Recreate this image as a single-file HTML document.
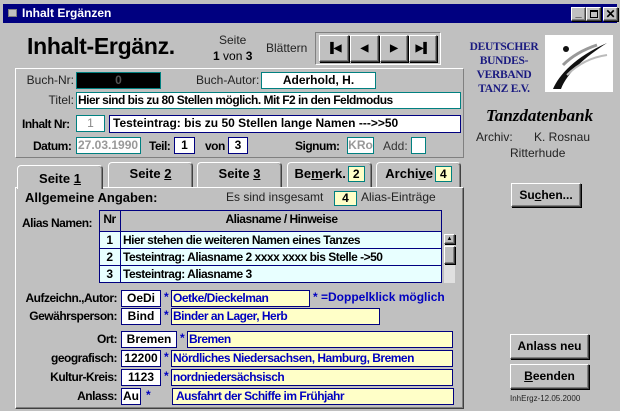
<!DOCTYPE html>
<html><head><meta charset="utf-8"><style>
*{margin:0;padding:0;box-sizing:border-box}
body{width:620px;height:411px;background:#c0c0c0;position:relative;overflow:hidden;font-family:"Liberation Sans",Arial,sans-serif;font-size:12px;color:#000}
.a{position:absolute;white-space:nowrap}
.b{font-weight:bold}
.f{position:absolute;background:#fff;border:1px solid #008080;white-space:nowrap;overflow:hidden;font-weight:bold;line-height:15px}
.n{border:1.5px solid #000080}
.y{background:#ffffc8;color:#0000c0;border:1px solid #000080;padding-left:1px}
.c{letter-spacing:-0.5px}
.r{text-align:right}
.btn{position:absolute;background:#c0c0c0;border:1px solid;border-color:#fff #404040 #404040 #fff;box-shadow:1px 1px 0 #000,inset -1px -1px 0 #808080;text-align:center;font-weight:bold;font-size:12px}
.tab{position:absolute;top:162px;height:26px;border:1px solid;border-color:#fff #404040 #c0c0c0 #fff;border-radius:4px 4px 0 0;box-shadow:inset -1px 0 0 #808080;font-weight:bold;font-size:13px;text-align:center;line-height:22px}
.sq{display:inline-block;background:#ffffc8;border:1px solid #008080;padding:0 4px;line-height:14px;font-size:12px;margin-left:2px}
</style></head><body>
<!-- title bar -->
<div class="a" style="left:3px;top:4px;width:614px;height:19px;background:#000080"></div>
<div class="a" style="left:8px;top:9px;width:9px;height:8px;background:#c0c0c0;border:1px solid #808080"></div>
<div class="a b" style="left:22px;top:6px;color:#fff;font-size:12px">Inhalt Ergänzen</div>
<div class="btn" style="left:571px;top:7px;width:15px;height:14px;line-height:10px;font-size:11px">_</div>
<div class="btn" style="left:586px;top:7px;width:15px;height:14px"><div style="position:absolute;left:3px;top:2px;width:8px;height:8px;border:1px solid #000;border-top-width:2px"></div></div>
<div class="btn" style="left:603px;top:7px;width:15px;height:14px;line-height:12px;font-size:12px">✕</div>

<div class="a b" style="left:27px;top:33px;font-size:23px;letter-spacing:-0.3px">Inhalt-Ergänz.</div>
<div class="a" style="left:219px;top:33px;font-size:12px;color:#222">Seite</div>
<div class="a" style="left:213px;top:49px;font-size:12px"><b>1</b> von <b>3</b></div>
<div class="a" style="left:266px;top:41px;font-size:12px;color:#222">Blättern</div>
<div class="a" style="left:315px;top:32px;width:126px;height:33px;border:1px solid;border-color:#808080 #fff #fff #808080"></div>
<div class="btn" style="left:319px;top:35px;width:30px;height:27px;line-height:25px;font-size:10px">▐◀</div>
<div class="btn" style="left:350px;top:35px;width:29px;height:27px;line-height:25px;font-size:10px">◀</div>
<div class="btn" style="left:380px;top:35px;width:28px;height:27px;line-height:25px;font-size:10px">▶</div>
<div class="btn" style="left:409px;top:35px;width:28px;height:27px;line-height:25px;font-size:10px">▶▌</div>

<div class="a b" style="left:462px;top:40px;width:84px;text-align:center;font-family:'Liberation Serif',serif;color:#1a1a80;font-size:11.5px;line-height:14px;letter-spacing:-0.3px">DEUTSCHER<br>BUNDES-<br>VERBAND<br>TANZ E.V.</div>
<div class="a" style="left:545px;top:35px;width:68px;height:57px;background:#fff">
<svg width="68" height="57"><path d="M8 54 C14 40 30 22 62 8 C40 22 22 38 16 54 Z" fill="#111"/><path d="M18 30 C28 20 40 14 52 10" stroke="#999" stroke-width="3" fill="none"/><path d="M22 40 C34 28 48 22 62 20" stroke="#bbb" stroke-width="2" fill="none"/><circle cx="21" cy="14" r="3" fill="#111"/></svg></div>
<div class="a b" style="left:486px;top:106px;font-family:'Liberation Serif',serif;font-style:italic;font-size:17px">Tanzdatenbank</div>
<div class="a" style="left:476px;top:130px;color:#222">Archiv:</div>
<div class="a" style="left:534px;top:130px;color:#222">K. Rosnau</div>
<div class="a" style="left:510px;top:146px;color:#222">Ritterhude</div>

<!-- upper frame -->
<div class="a" style="left:15px;top:68px;width:449px;height:90px;border:1px solid;border-color:#fff #808080 #808080 #fff"></div>
<div class="a r" style="left:20px;top:73px;width:54px;color:#222">Buch-Nr:</div>
<div class="f" style="left:76px;top:72px;width:85px;height:17px;background:#000;color:#555;text-align:center">0</div>
<div class="a" style="left:196px;top:73px;color:#222">Buch-Autor:</div>
<div class="f" style="left:261px;top:72px;width:115px;height:17px;text-align:center">Aderhold, H.</div>
<div class="a r" style="left:20px;top:93px;width:54px;color:#222">Titel:</div>
<div class="f c" style="left:76px;top:92px;width:385px;height:17px;padding-left:1px">Hier sind bis zu 80 Stellen möglich. Mit F2 in den Feldmodus</div>
<div class="a b c" style="left:22px;top:117px">Inhalt Nr:</div>
<div class="f" style="left:76px;top:115px;width:29px;height:17px;text-align:center;color:#888;font-weight:normal">1</div>
<div class="f n" style="left:109px;top:115px;width:352px;height:18px;padding-left:3px">Testeintrag: bis zu 50 Stellen lange Namen ---&gt;&gt;50</div>
<div class="a b c" style="left:33px;top:139px">Datum:</div>
<div class="f" style="left:76px;top:137px;width:65px;height:17px;color:#999;padding-left:1px">27.03.1990</div>
<div class="a b c" style="left:149px;top:139px">Teil:</div>
<div class="f n" style="left:174px;top:137px;width:21px;height:17px;text-align:center">1</div>
<div class="a b c" style="left:205px;top:139px">von</div>
<div class="f n" style="left:228px;top:137px;width:20px;height:17px;text-align:center">3</div>
<div class="a b c" style="left:295px;top:139px">Signum:</div>
<div class="f" style="left:347px;top:137px;width:27px;height:17px;color:#999;text-align:center">KRo</div>
<div class="a" style="left:383px;top:139px;color:#333">Add:</div>
<div class="f" style="left:411px;top:137px;width:15px;height:17px"></div>

<!-- tabs -->
<div class="tab" style="left:108px;width:85px">Seite <u>2</u></div>
<div class="tab" style="left:197px;width:85px">Seite <u>3</u></div>
<div class="tab" style="left:287px;width:85px">Be<u>m</u>erk.<span class="sq">2</span></div>
<div class="tab" style="left:376px;width:85px">Archi<u>v</u>e<span class="sq">4</span></div>
<div class="a" style="left:15px;top:187px;width:449px;height:222px;border:1px solid;border-color:#fff #404040 #404040 #fff;box-shadow:inset -1px -1px 0 #808080"></div>
<div class="tab" style="left:17px;top:165px;width:86px;height:24px;border-bottom:none;background:#c0c0c0;line-height:26px">Seite <u>1</u></div>

<div class="a b" style="left:25px;top:190px;font-size:13px">Allgemeine Angaben:</div>
<div class="a" style="left:226px;top:190px;color:#222">Es sind insgesamt</div>
<div class="f" style="left:334px;top:191px;width:23px;height:15px;background:#ffffc8;text-align:center;line-height:13px">4</div>
<div class="a" style="left:361px;top:190px;color:#222">Alias-Einträge</div>

<div class="a b c" style="left:22px;top:216px">Alias Namen:</div>
<div class="a" style="left:99px;top:210px;width:343px;height:73px;border:1px solid #000080;background:#c0c0c0"></div>
<div class="a b c" style="left:99px;top:212px;width:21px;text-align:center">Nr</div>
<div class="a" style="left:120px;top:210px;width:1px;height:73px;background:#000080"></div>
<div class="a b c" style="left:121px;top:212px;width:321px;text-align:center">Aliasname / Hinweise</div>
<div class="a" style="left:100px;top:231px;width:341px;height:51px;background:#e8ffff"></div>
<div class="a" style="left:100px;top:231px;width:341px;height:1px;background:#000080"></div>
<div class="a" style="left:100px;top:248px;width:341px;height:1px;background:#000080"></div>
<div class="a" style="left:100px;top:265px;width:341px;height:1px;background:#000080"></div>
<div class="a" style="left:120px;top:231px;width:1px;height:52px;background:#000080"></div>
<div class="a b c" style="left:99px;top:233px;width:21px;text-align:center">1</div>
<div class="a b c" style="left:123px;top:233px">Hier stehen die weiteren Namen eines Tanzes</div>
<div class="a b c" style="left:99px;top:250px;width:21px;text-align:center">2</div>
<div class="a b c" style="left:123px;top:250px">Testeintrag: Aliasname 2 xxxx xxxx bis Stelle -&gt;50</div>
<div class="a b c" style="left:99px;top:267px;width:21px;text-align:center">3</div>
<div class="a b c" style="left:123px;top:267px">Testeintrag: Aliasname 3</div>
<div class="a" style="left:444px;top:234px;width:11px;height:49px;background:#e0e0e0"></div>
<div class="btn" style="left:444px;top:234px;width:11px;height:10px;font-size:6px;line-height:8px">▲</div>
<div class="btn" style="left:444px;top:246px;width:11px;height:18px"></div>

<!-- lower fields -->
<div class="a b c r" style="left:10px;top:291px;width:107px">Aufzeichn.,Autor:</div>
<div class="f n" style="left:121px;top:290px;width:40px;height:17px;text-align:center;border-width:1px">OeDi</div>
<div class="a b" style="left:164px;top:290px;color:#0000c0">*</div>
<div class="f y c" style="left:171px;top:290px;width:139px;height:17px">Oetke/Dieckelman</div>
<div class="a b" style="left:313px;top:290px;color:#0000c0">* =Doppelklick möglich</div>

<div class="a b c r" style="left:10px;top:309px;width:107px">Gewährsperson:</div>
<div class="f n" style="left:121px;top:308px;width:40px;height:17px;text-align:center;border-width:1px">Bind</div>
<div class="a b" style="left:164px;top:308px;color:#0000c0">*</div>
<div class="f y c" style="left:171px;top:308px;width:209px;height:17px">Binder an Lager, Herb</div>

<div class="a b c r" style="left:10px;top:332px;width:107px">Ort:</div>
<div class="f n" style="left:121px;top:331px;width:56px;height:17px;text-align:center;border-width:1px">Bremen</div>
<div class="a b" style="left:180px;top:331px;color:#0000c0">*</div>
<div class="f y c" style="left:187px;top:331px;width:266px;height:17px">Bremen</div>

<div class="a b c r" style="left:10px;top:351px;width:107px">geografisch:</div>
<div class="f n" style="left:121px;top:350px;width:40px;height:17px;text-align:center;border-width:1px">12200</div>
<div class="a b" style="left:164px;top:350px;color:#0000c0">*</div>
<div class="f y c" style="left:171px;top:350px;width:282px;height:17px">Nördliches Niedersachsen, Hamburg, Bremen</div>

<div class="a b c r" style="left:10px;top:370px;width:107px">Kultur-Kreis:</div>
<div class="f n" style="left:121px;top:369px;width:40px;height:17px;text-align:center;border-width:1px">1123</div>
<div class="a b" style="left:164px;top:369px;color:#0000c0">*</div>
<div class="f y c" style="left:171px;top:369px;width:282px;height:17px">nordniedersächsisch</div>

<div class="a b c r" style="left:10px;top:389px;width:107px">Anlass:</div>
<div class="f n" style="left:121px;top:388px;width:20px;height:17px;text-align:center;border-width:1px">Au</div>
<div class="a b" style="left:146px;top:388px;color:#0000c0">*</div>
<div class="f y c" style="left:172px;top:388px;width:282px;height:17px;padding-left:3px">Ausfahrt der Schiffe im Frühjahr</div>

<!-- buttons -->
<div class="btn" style="left:511px;top:183px;width:70px;height:24px;line-height:22px">Su<u>c</u>hen...</div>
<div class="btn" style="left:510px;top:334px;width:79px;height:25px;line-height:23px">Anlass neu</div>
<div class="btn" style="left:510px;top:364px;width:79px;height:25px;line-height:23px"><u>B</u>eenden</div>
<div class="a" style="left:510px;top:394px;font-size:8px;color:#222">InhErgz-12.05.2000</div>
</body></html>
